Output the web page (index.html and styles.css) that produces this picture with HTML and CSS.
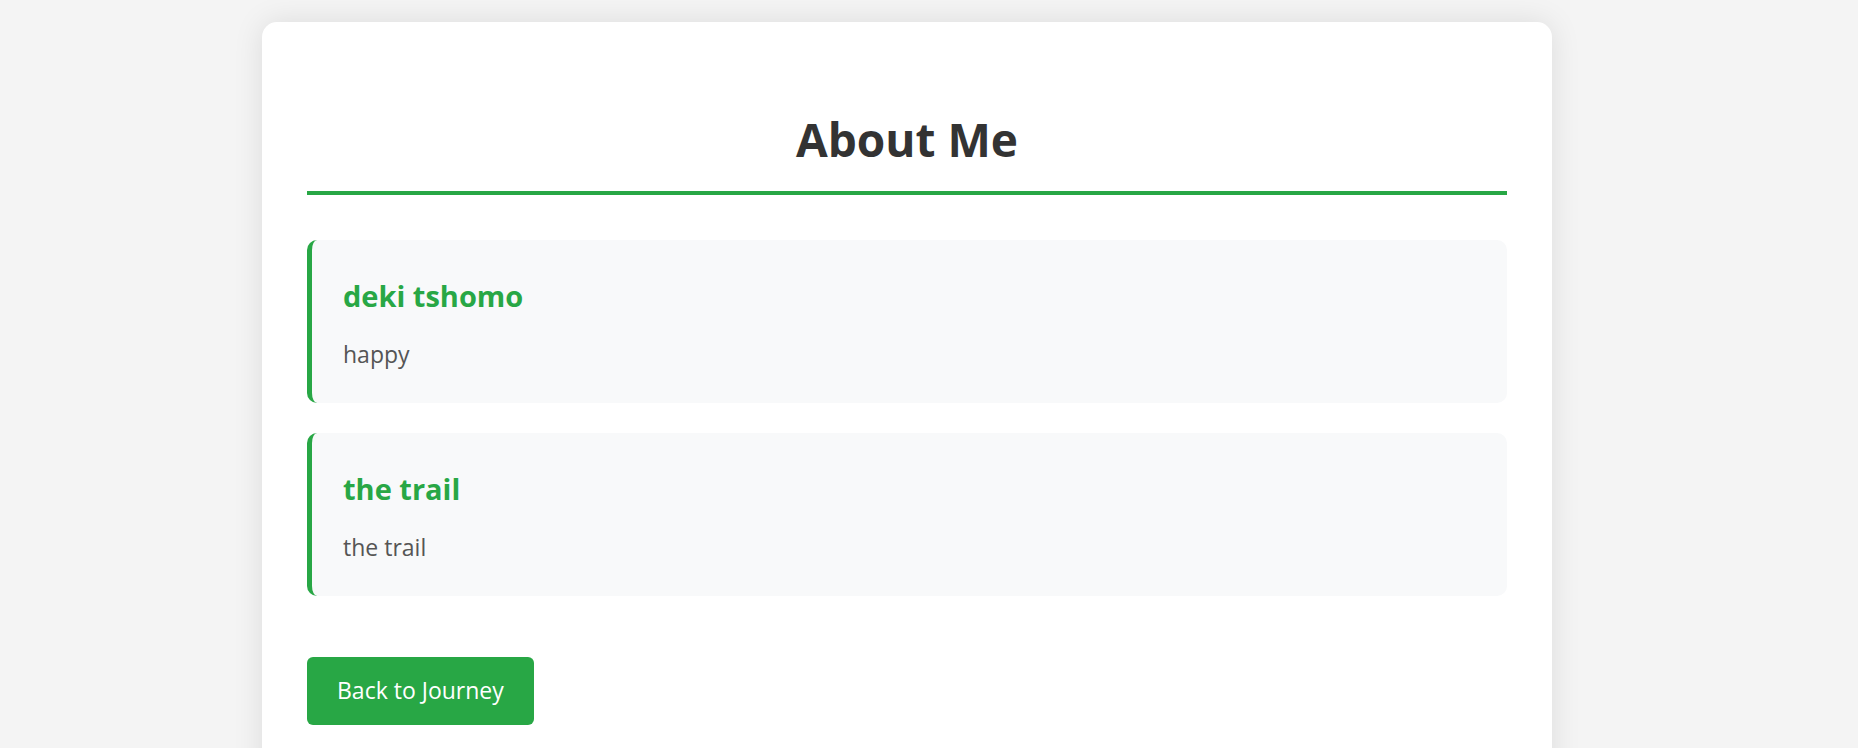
FILE: index.html
```html
<!DOCTYPE html>
<html lang="en">
<head>
<meta charset="utf-8">
<title>About Me</title>
<link rel="stylesheet" href="styles.css">
</head>
<body>
  <main class="card">
    <h1 class="title">About Me</h1>
    <section class="item">
      <h2 class="item-title">deki tshomo</h2>
      <p class="item-text">happy</p>
    </section>
    <section class="item">
      <h2 class="item-title">the trail</h2>
      <p class="item-text">the trail</p>
    </section>
    <a class="back-btn" href="#">Back to Journey</a>
  </main>
</body>
</html>
```

FILE: styles.css
```css
* {
  box-sizing: border-box;
}

html, body {
  margin: 0;
  padding: 0;
}

body {
  background: #f4f4f4;
  font-family: "Open Sans", "Noto Sans", sans-serif;
  color: #333;
  overflow: hidden;
}

.card {
  display: block;
  width: 1290px;
  margin: 22px 0 0 262px;
  padding: 45px 45px 60px;
  background: #ffffff;
  border-radius: 15px;
  box-shadow: 0 0 30px rgba(0, 0, 0, 0.1);
}

.title {
  margin: 42px 0 45px;
  padding-bottom: 22px;
  border-bottom: 4px solid #28a745;
  text-align: center;
  font-size: 46px;
  line-height: 60px;
  font-weight: 700;
  color: #333;
}

.item {
  margin-bottom: 30px;
  padding: 32px 30px 32px 31px;
  background: #f8f9fa;
  border-left: 5px solid #28a745;
  border-radius: 10px;
}

.item-title {
  margin: 6px 0 24px;
  font-size: 29px;
  line-height: 36px;
  font-weight: 700;
  color: #28a745;
}

.item-text {
  margin: 0;
  font-size: 23px;
  line-height: 33px;
  color: #555;
}

.back-btn {
  display: inline-block;
  margin-top: 31px;
  padding: 17px 30px 18px;
  background: #28a745;
  color: #ffffff;
  font-size: 23px;
  line-height: 33px;
  text-decoration: none;
  border-radius: 6px;
}
```
